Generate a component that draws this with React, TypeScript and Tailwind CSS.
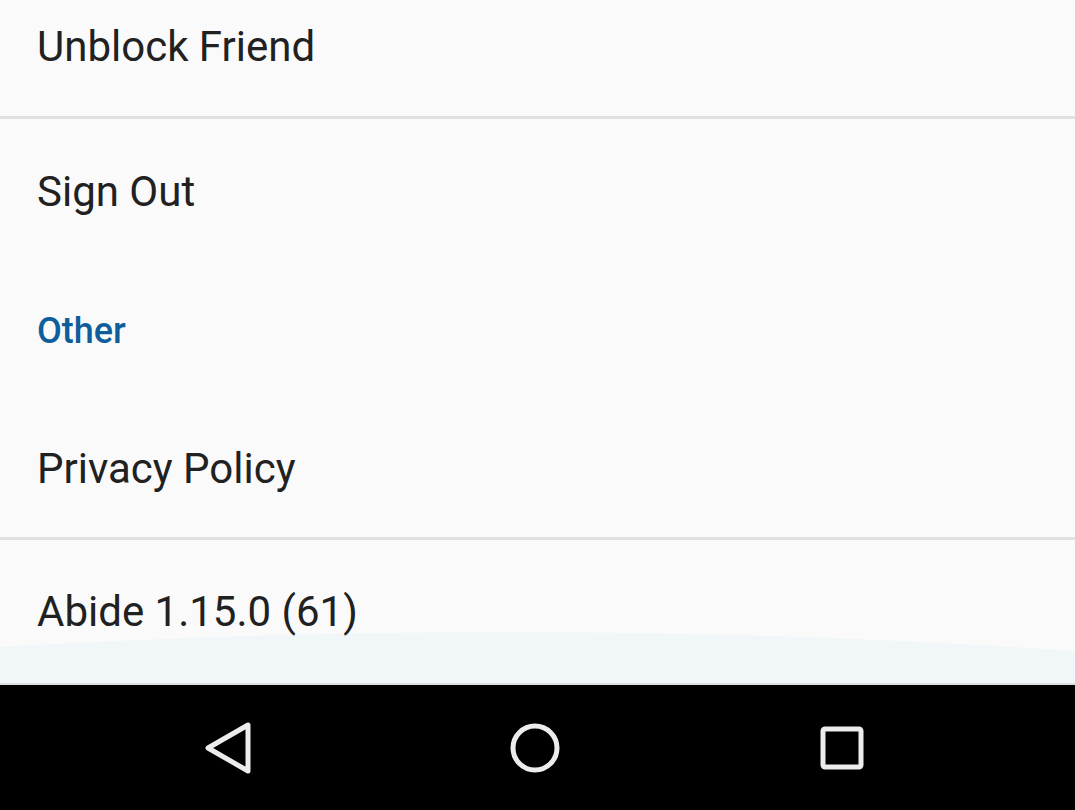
import { ReactNode } from 'react';

const Row = ({ children, className = '' }: { children: ReactNode; className?: string }) => (
    <div className={`flex items-center px-[37px] text-[42px] text-[#212121] ${className}`}>
        {children}
    </div>
);

const Divider = () => <div className="h-[3px] bg-[#e0e0e0]" />;

export default function App() {
    return (
        <div
            className="w-[1075px] h-[810px] flex flex-col bg-[#fafafa] overflow-hidden"
            style={{ fontFamily: 'Roboto, "Noto Sans", sans-serif' }}
        >
            <Row className="h-[116px] pb-[24px]">Unblock Friend</Row>
            <Divider />
            <Row className="h-[144px]">Sign Out</Row>

            <div className="h-[136px] flex items-center px-[37px] text-[36px] font-medium text-[#0e5e9c]">
                Other
            </div>

            <Row className="h-[138px]">Privacy Policy</Row>
            <Divider />

            {/* last row, with the light sheet edge curving under it */}
            <div className="relative h-[143px]">
                <svg
                    className="absolute left-0 bottom-0"
                    width="1075"
                    height="56"
                    viewBox="0 0 1075 56"
                    preserveAspectRatio="none"
                >
                    <path d="M0 20 Q 540 -12 1075 24 L1075 56 L0 56 Z" fill="#f1f6f8" />
                </svg>
                <Row className="relative h-full">Abide 1.15.0 (61)</Row>
            </div>

            <div className="h-[2px] bg-[#dcdfe0]" />

            {/* android navigation bar */}
            <div className="flex-1 bg-black flex items-center justify-center gap-[187px] pr-[5px]">
                <div className="w-[120px] flex justify-center">
                    <svg width="56" height="56" viewBox="0 0 56 56" fill="none">
                        <path
                            d="M48 5 L48 51 L8 28 Z"
                            stroke="#ececec"
                            strokeWidth="5"
                            strokeLinejoin="round"
                        />
                    </svg>
                </div>
                <div className="w-[120px] flex justify-center">
                    <svg width="54" height="54" viewBox="0 0 54 54" fill="none">
                        <circle cx="27" cy="27" r="22" stroke="#ececec" strokeWidth="5" />
                    </svg>
                </div>
                <div className="w-[120px] flex justify-center">
                    <svg width="48" height="48" viewBox="0 0 48 48" fill="none">
                        <rect x="5" y="5" width="38" height="38" rx="2" stroke="#ececec" strokeWidth="5" />
                    </svg>
                </div>
            </div>
        </div>
    );
}
